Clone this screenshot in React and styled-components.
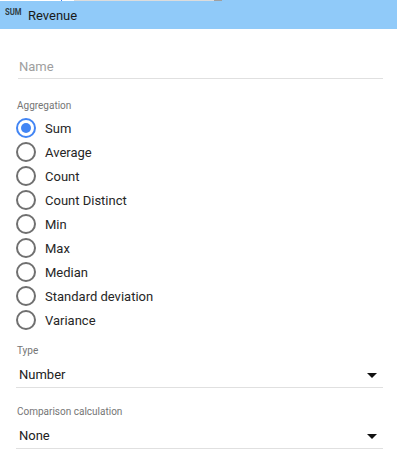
import React from "react";
import styled, { createGlobalStyle } from "styled-components";

const Global = createGlobalStyle`
  html, body { margin: 0; padding: 0; background: #fff; }
  body { font-family: Roboto, "Liberation Sans", sans-serif; width: 397px; height: 456px; overflow: hidden; }
`;

const Panel = styled.div`
  position: relative;
  width: 397px;
  height: 456px;
  background: #fff;
`;

const TopStrip = styled.div`
  position: absolute;
  left: 0;
  top: 0;
  height: 1px;
  width: 222px;
  display: flex;
`;

const StripSeg = styled.div`
  height: 1px;
  width: ${(p) => p.$w}px;
  background: ${(p) => p.$c};
`;

const Header = styled.div`
  height: 29px;
  background: #90caf9;
  display: flex;
  align-items: center;
  padding-left: 5px;
  box-sizing: border-box;
`;

const Badge = styled.span`
  font-size: 8.4px;
  line-height: 10px;
  font-weight: 700;
  color: #2f3e46;
  align-self: flex-start;
  margin-top: 7px;
  width: 23px;
  transform: scaleX(0.92);
  transform-origin: left center;
`;

const Title = styled.span`
  font-size: 13px;
  color: #1a1a1a;
  margin-top: 1px;
`;

const Form = styled.div`
  padding: 0 14px 0 17px;
  display: flex;
  flex-direction: column;
`;

const NameField = styled.div`
  margin-top: 30px;
  margin-left: 1px;
  height: 19px;
  border-bottom: 1px solid #e0e0e0;
  font-size: 13px;
  line-height: 16px;
  color: #9e9e9e;
  padding-left: 1px;
`;

const Label = styled.div`
  font-size: 10px;
  line-height: 12px;
  color: #757575;
  margin-top: ${(p) => p.$mt}px;
`;

const RadioList = styled.div`
  display: flex;
  flex-direction: column;
  margin-top: 4px;
`;

const RadioRow = styled.div`
  height: 24px;
  display: flex;
  align-items: center;
`;

const Circle = styled.span`
  width: 20px;
  height: 20px;
  box-sizing: border-box;
  border-radius: 50%;
  border: 2px solid ${(p) => (p.$on ? "#4285f4" : "#707070")};
  display: flex;
  align-items: center;
  justify-content: center;
  margin-left: -1px;
  margin-right: 9px;
  &::after {
    content: "";
    width: 10px;
    height: 10px;
    border-radius: 50%;
    background: ${(p) => (p.$on ? "#4285f4" : "transparent")};
  }
`;

const RadioText = styled.span`
  font-size: 13px;
  color: #262626;
`;

const Select = styled.div`
  margin-top: ${(p) => p.$mt}px;
  margin-left: -1px;
  height: 28px;
  box-sizing: border-box;
  border-bottom: 1px solid #e0e0e0;
  display: flex;
  align-items: flex-start;
  justify-content: space-between;
  padding: 7px 6px 0 3px;
  font-size: 13px;
  line-height: 16px;
  color: #212121;
`;

const ArrowBox = styled.span`
  display: flex;
  padding-top: 6px;
`;

const Arrow = () => (
  <ArrowBox>
    <svg width="10" height="5" viewBox="0 0 10 5">
      <path d="M0 0 L10 0 L5 5 Z" fill="#111" />
    </svg>
  </ArrowBox>
);

const options = [
  "Sum",
  "Average",
  "Count",
  "Count Distinct",
  "Min",
  "Max",
  "Median",
  "Standard deviation",
  "Variance",
];

export default function App() {
  return (
    <Panel>
      <Global />
      <Header>
        <Badge>SUM</Badge>
        <Title>Revenue</Title>
      </Header>
      <TopStrip>
        <StripSeg $w={61} $c="#ffffff" />
        <StripSeg $w={1} $c="#4285f4" />
        <StripSeg $w={12} $c="#ffffff" />
        <StripSeg $w={140} $c="#dcdcdc" />
        <StripSeg $w={8} $c="#a0a0a0" />
      </TopStrip>
      <Form>
        <NameField>Name</NameField>
        <Label $mt={21}>Aggregation</Label>
        <RadioList>
          {options.map((o, i) => (
            <RadioRow key={o}>
              <Circle $on={i === 0} />
              <RadioText>{o}</RadioText>
            </RadioRow>
          ))}
        </RadioList>
        <Label $mt={13}>Type</Label>
        <Select $mt={3}>
          <span>Number</span>
          <Arrow />
        </Select>
        <Label $mt={18}>Comparison calculation</Label>
        <Select $mt={3}>
          <span>None</span>
          <Arrow />
        </Select>
      </Form>
    </Panel>
  );
}
